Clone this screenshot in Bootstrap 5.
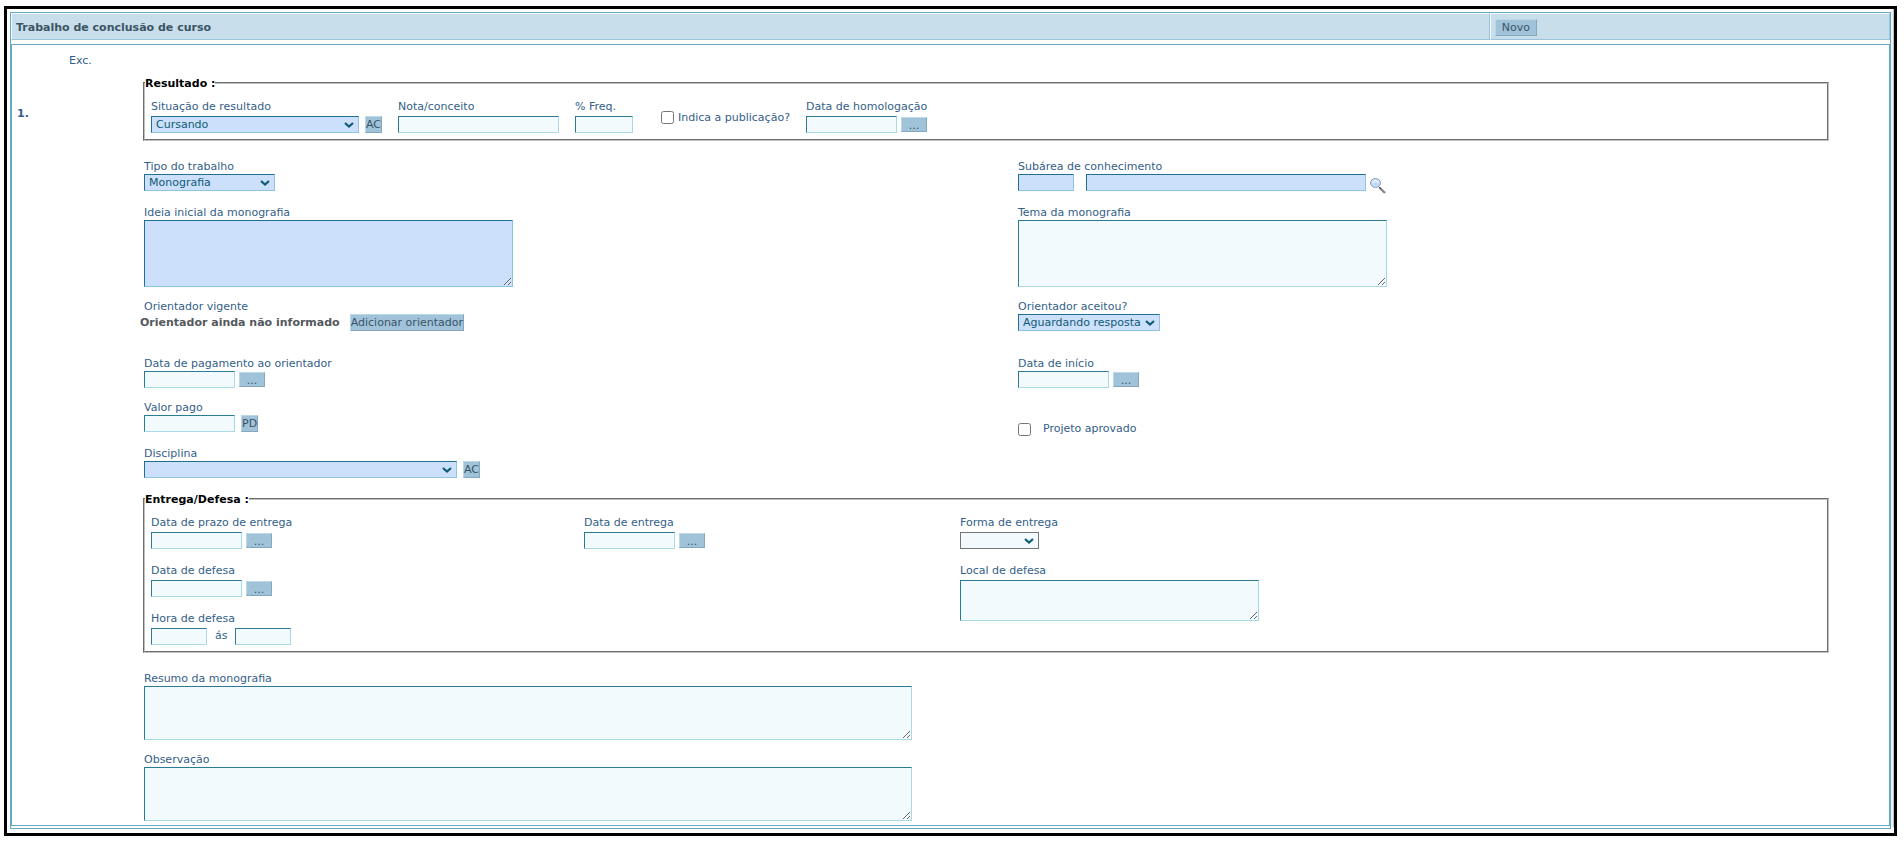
<!DOCTYPE html>
<html lang="pt-BR">
<head>
<meta charset="utf-8">
<meta name="viewport" content="width=device-width, initial-scale=1">
<title>Trabalho de conclusão de curso</title>
<link href="https://cdn.jsdelivr.net/npm/bootstrap@5.3.0/dist/css/bootstrap.min.css" rel="stylesheet">
<style>
body { font: 11px/16px Verdana, "DejaVu Sans", sans-serif; color: #336088; background: #fff; padding: 6px 7px 6px 4px; }
.frame { border: 3px solid #000; }
.sheet { border: 1px solid #66abc6; margin: 3px 0 4px 3px; padding-bottom: 2px; min-width: 0; }
.scroll-track { width: 3px; background: #f1f1f1; border-right: 1px solid #c4c4c4; margin-bottom: 6px; }
.title-row { margin-bottom: 4px; }
.title-cell { background: #c8deeb; border: 1px solid; border-color: #f3f9fc #9ac4dc #9ac4dc #f3f9fc; height: 27px; padding: 2px 4px 0; color: #3b5565; }
.title-main { flex: 1 1 0; }
.title-tools { flex: 0 0 21.3%; }
.panel { border: 1px solid #66abc6; padding: 8px 60px 4px 5px; }
.col-number { width: 52px; padding-top: 53px; }
.col-exc { width: 71px; }
.col-fields { padding-top: 22px; min-width: 0; }
.two-cols { display: grid; grid-template-columns: 874fr 815fr; }
.two-cols > div, .wide { padding-left: 4px; }
.gap-xs { margin-top: 8px; }
.gap-s { margin-top: 11px; }
.gap-m { margin-top: 13px; }
.gap-l { margin-top: 17px; }
.gap-xl { margin-top: 24px; }
.gap-lens { margin-top: 10px; }
fieldset.group { border: 2px groove #c0c0c0; margin-left: 3px; padding: 7px 0 6px; }
.group-body { padding: 0 6px; }
.group legend { float: none; width: auto; font-size: 11px; line-height: 14px; font-weight: bold; color: #000; margin: 0; padding: 2px 0 0; }
.group label.cap { margin-bottom: 2px; }
.three-cols { display: grid; grid-template-columns: 433fr 376fr 861fr; row-gap: 13px; }
.span-two { grid-row: span 2; }
.cap { display: block; line-height: 14px; padding-top: 2px; }
.field { font: inherit; color: #1f6f8b; height: 17px; padding: 0 4px; background: #f2fafe; border: 1px solid; border-color: #2b7b95 #a9d9e6 #a9d9e6 #2b7b95; border-radius: 0; display: block; max-width: 100%; }
.need { background-color: #cce0fb; color: #0f5a75; border-color: #226f94 #8fc3e2 #8fc3e2 #226f94; }
select.field { appearance: none; line-height: 15px; background-repeat: no-repeat; background-position: right 4px top 5px; background-image: url("data:image/svg+xml,%3Csvg xmlns='http://www.w3.org/2000/svg' width='10' height='6'%3E%3Cpath d='M1 1l4 3.500 4-3.500' fill='none' stroke='%230f5a75' stroke-width='2.200'/%3E%3C/svg%3E"); }
.plain { border-color: #767676; }
textarea.field { resize: both; }
.w-date { width: 91px; } .w-tiny { width: 56px; } .w-freq { width: 58px; } .w-nota { width: 161px; }
.w-sit { width: 208px; } .w-tipo { width: 131px; } .w-sub { width: 280px; } .w-resp { width: 142px; }
.w-disc { width: 313px; } .w-forma { width: 79px; } .w-area { width: 369px; } .w-local { width: 299px; } .w-long { width: 768px; }
.h-area { height: 67px; } .h-local { height: 41px; } .h-long { height: 54px; }
.btn.act { --bs-btn-font-size: 11px; --bs-btn-line-height: 15px; --bs-btn-padding-x: 0; --bs-btn-padding-y: 0; --bs-btn-border-radius: 0; --bs-btn-color: #3a5366; --bs-btn-bg: #a0c3da; height: 17px; white-space: nowrap; border-color: #bad8e5 #84a8bf #84a8bf #bad8e5; }
.btn.code { width: 17px; }
.btn.dots { width: 26px; height: 15px; line-height: 15px; }
.btn.new { width: 42px; }
.btn.add { width: 114px; }
.ctl { display: flex; align-items: center; gap: 4px; }
.gap-code { gap: 6px; }
.advisor { color: #54585c; }
.tick { width: 13px; height: 13px; margin: 0; }
.tick-row { padding-top: 22px; }
.lens { width: 16px; height: 16px; padding: 0; border: 0; background: none; }
.lens svg { display: block; }
</style>
</head>
<body>
<main class="frame d-flex">
<div class="sheet flex-grow-1">
  <header class="title-row d-flex">
    <div class="title-cell title-main d-flex align-items-center fw-bold">Trabalho de conclusão de curso</div>
    <div class="title-cell title-tools d-flex align-items-center"><button type="button" class="btn act new">Novo</button></div>
  </header>
  <form class="panel d-flex">
    <div class="col-number fw-bold">1.</div>
    <div class="col-exc">Exc.</div>
    <div class="col-fields flex-grow-1">
      <fieldset class="group">
        <legend>Resultado :</legend>
        <div class="group-body d-flex gap-3">
          <div><label class="cap" for="sit">Situação de resultado</label>
            <div class="ctl gap-code"><select id="sit" class="field need w-sit"><option>Cursando</option></select><button type="button" class="btn act code">AC</button></div></div>
          <div><label class="cap" for="nota">Nota/conceito</label><input id="nota" class="field w-nota"></div>
          <div><label class="cap" for="freq">% Freq.</label><input id="freq" class="field w-freq"></div>
          <div class="ctl ps-2 ms-1 pt-1"><input type="checkbox" id="pub" class="tick"><label for="pub">Indica a publicação?</label></div>
          <div><label class="cap" for="homol">Data de homologação</label>
            <div class="ctl"><input id="homol" class="field w-date"><button type="button" class="btn act dots">...</button></div></div>
        </div>
      </fieldset>
      <div class="two-cols gap-l">
        <div><label class="cap" for="tipo">Tipo do trabalho</label><select id="tipo" class="field need w-tipo"><option>Monografia</option></select></div>
        <div><label class="cap" for="subcod">Subárea de conhecimento</label>
          <div class="d-flex"><input id="subcod" class="field need w-tiny me-2"><input aria-label="Nome da subárea" class="field need w-sub ms-1 me-1">
            <button type="button" class="lens mt-1" aria-label="Pesquisar"><svg width="16" height="16" viewBox="0 0 16 16"><path d="M9.500 9.500L15 15" stroke="#858089" stroke-width="2.200"/><path d="M9 9L11 11" stroke="#444" stroke-width="1"/><ellipse cx="5.500" cy="5" rx="5" ry="4.500" fill="#c0dafa" stroke="#959dbd"/><path d="M2.500 4.500Q5.500 1.500 8.500 4.500" stroke="#e6f2ff" stroke-width="2" fill="none"/></svg></button></div></div>
      </div>
      <div class="two-cols gap-lens">
        <div><label class="cap" for="ideia">Ideia inicial da monografia</label><textarea id="ideia" class="field need w-area h-area"></textarea></div>
        <div><label class="cap" for="tema">Tema da monografia</label><textarea id="tema" class="field w-area h-area"></textarea></div>
      </div>
      <div class="two-cols gap-s">
        <section><div class="cap ps-1">Orientador vigente</div>
          <div class="ctl gap-code"><strong class="advisor me-1">Orientador ainda não informado</strong><button type="button" class="btn act add">Adicionar orientador</button></div></section>
        <div><label class="cap" for="aceitou">Orientador aceitou?</label><select id="aceitou" class="field need w-resp"><option>Aguardando resposta</option></select></div>
      </div>
      <div class="two-cols gap-xl">
        <div><label class="cap" for="pagto">Data de pagamento ao orientador</label><div class="ctl"><input id="pagto" class="field w-date"><button type="button" class="btn act dots">...</button></div></div>
        <div><label class="cap" for="inicio">Data de início</label><div class="ctl"><input id="inicio" class="field w-date"><button type="button" class="btn act dots">...</button></div></div>
      </div>
      <div class="two-cols gap-s">
        <div><label class="cap" for="valor">Valor pago</label><div class="ctl gap-code"><input id="valor" class="field w-date"><button type="button" class="btn act code">PD</button></div></div>
        <div class="tick-row d-flex align-items-center gap-2"><input type="checkbox" id="proj" class="tick me-1"><label for="proj">Projeto aprovado</label></div>
      </div>
      <div class="wide gap-xs"><label class="cap" for="disc">Disciplina</label><div class="ctl gap-code"><select id="disc" class="field need w-disc"><option></option></select><button type="button" class="btn act code">AC</button></div></div>
      <fieldset class="group gap-m">
        <legend>Entrega/Defesa :</legend>
        <div class="group-body three-cols">
          <div><label class="cap" for="prazo">Data de prazo de entrega</label><div class="ctl"><input id="prazo" class="field w-date"><button type="button" class="btn act dots">...</button></div></div>
          <div><label class="cap" for="entrega">Data de entrega</label><div class="ctl"><input id="entrega" class="field w-date"><button type="button" class="btn act dots">...</button></div></div>
          <div><label class="cap" for="forma">Forma de entrega</label><select id="forma" class="field plain w-forma"><option></option></select></div>
          <div><label class="cap" for="defesa">Data de defesa</label><div class="ctl"><input id="defesa" class="field w-date"><button type="button" class="btn act dots">...</button></div></div>
          <div class="span-two"></div>
          <div class="span-two"><label class="cap" for="local">Local de defesa</label><textarea id="local" class="field w-local h-local"></textarea></div>
          <div><label class="cap" for="hora">Hora de defesa</label><div class="d-flex gap-2"><input id="hora" class="field w-tiny"><label for="horafim">ás</label><input id="horafim" class="field w-tiny"></div></div>
        </div>
      </fieldset>
      <div class="wide gap-l"><label class="cap" for="resumo">Resumo da monografia</label><textarea id="resumo" class="field w-long h-long"></textarea></div>
      <div class="wide gap-s"><label class="cap" for="obs">Observação</label><textarea id="obs" class="field w-long h-long"></textarea></div>
    </div>
  </form>
</div>
<div class="scroll-track"></div>
</main>
<script src="https://cdn.jsdelivr.net/npm/bootstrap@5.3.0/dist/js/bootstrap.bundle.min.js"></script>
</body>
</html>
